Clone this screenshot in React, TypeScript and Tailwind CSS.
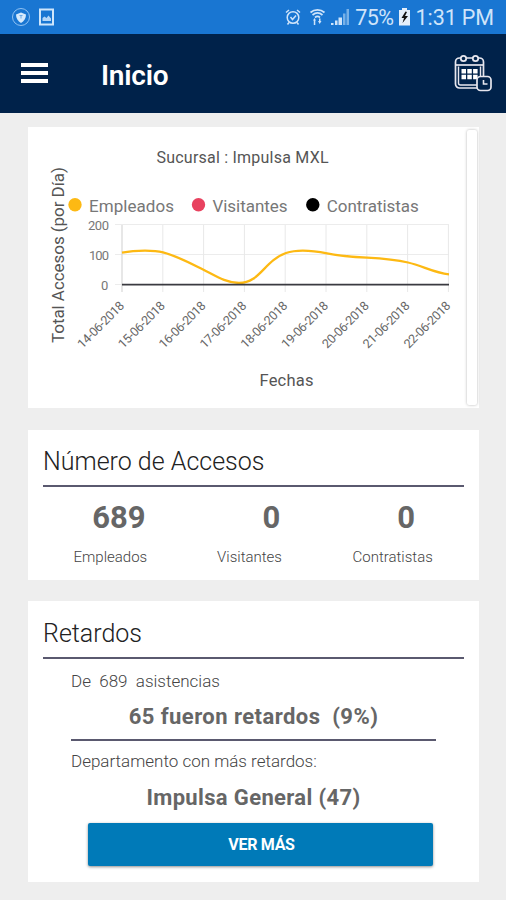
import * as React from 'react';

const DATES = [
  '14-06-2018',
  '15-06-2018',
  '16-06-2018',
  '17-06-2018',
  '18-06-2018',
  '19-06-2018',
  '20-06-2018',
  '21-06-2018',
  '22-06-2018'
];

const LEGEND = [
  {label: 'Empleados', color: '#fdb913', x: 47, width: 85},
  {label: 'Visitantes', color: '#e8425f', x: 170.5, width: 75},
  {label: 'Contratistas', color: '#000000', x: 284.8, width: 92}
];

const Y_TICKS = [
  {label: '200', y: 98, width: 21},
  {label: '100', y: 128, width: 20},
  {label: '0', y: 158, width: 8}
];

const TOTALS = [
  {label: 'Empleados', value: 689, cell: 'w-[135px]', number: 'pl-[17px]'},
  {label: 'Visitantes', value: 0, cell: 'w-[144px]', number: 'pl-[44px]'},
  {label: 'Contratistas', value: 0, cell: 'w-[143px]', number: 'pl-[27px]'}
];

function StatusBar() {
  return (
    <div className="flex h-[34px] items-center justify-between bg-[#1976d2] pr-3 pl-3 text-[#cfe4fa]">
      <svg width="44" height="22" viewBox="0 0 44 22" fill="none">
        <circle cx="9" cy="11" r="8.5" stroke="#8fc1f2" strokeWidth="1" />
        <path d="M4 8.5 9 6.5l5 2c0 4-2 6.500-5 8.500-3-2-5-4.500-5-8.500Z" fill="#d5e9fc" />
        <path d="M7.500 9.500h3M9 9.500v3" stroke="#6aa9e6" strokeWidth="1" />
        <rect x="28" y="3.500" width="13" height="15" stroke="#cfe6fb" strokeWidth="2" />
        <path d="M30.500 15v-3l2-1.500 2 1.500 2-2.500 2.500 3V15Z" fill="#b4d6f7" />
      </svg>
      <div className="flex items-center">
        <svg width="66" height="22" viewBox="0 0 66 22" fill="none">
          <circle cx="9" cy="11.500" r="5.800" stroke="currentColor" strokeWidth="1.500" />
          <path d="m6.500 11 2 2.500 3.500-4M2 6.500 5 4M16 6.500 13 4M5 16.500l-1.500 2M13 16.500l1.500 2" stroke="currentColor" strokeWidth="1.500" />
          <path d="M26.500 6.500c4-3.500 10-3.500 14 0M28.500 9c3-2.500 7-2.500 10 0M31 11.500c1.500-1.300 3.500-1.300 5 0" stroke="currentColor" strokeWidth="1.700" />
          <path d="M29 14.500h3l-1.500-2.500Zm.8 0h1.500v4.500H29.800ZM34 15h3.500l-1.800 3Zm1-2.500h1.500V16H35Z" fill="currentColor" />
          <path d="M47 17h2.500v2H47ZM51 14.500h2.500V19H51ZM54.500 11.500H58V19h-3.500Z" fill="currentColor" />
          <path d="M59 7.500h2.500V19H59ZM62.500 3H65v16h-2.500Z" fill="#78b1e8" />
        </svg>
        <span className="ml-[5px] pt-[2px] text-[21.5px] leading-none tracking-[-0.5px]">75%</span>
        <svg className="ml-[4px]" width="13" height="20" viewBox="0 0 13 20">
          <path d="M4 1h5v2h3v15.500H1V3h3Z" fill="#e3eefa" />
          <path d="M7.500 4.500 3.500 11H6l-1.500 5L10 9H7L9 5Z" fill="#111" />
        </svg>
        <span className="ml-[5px] pt-[2px] text-[21.5px] leading-none tracking-[-0.1px]">1:31 PM</span>
      </div>
    </div>
  );
}

function CalendarIcon() {
  return (
    <svg width="40" height="40" viewBox="0 0 40 40" fill="none" stroke="#e6e6ee">
      <rect x="2.500" y="4" width="28" height="30" rx="4" strokeWidth="1.700" />
      <path d="M5.500 12.500V29a2 2 0 0 0 2 2H24M27.500 12.500V22" strokeWidth="1.400" />
      <path d="M3 11h27" strokeWidth="1.700" />
      <circle cx="10.500" cy="4.500" r="2.700" fill="#00224a" strokeWidth="1.800" />
      <circle cx="22.500" cy="4.500" r="2.700" fill="#00224a" strokeWidth="1.800" />
      <path
        d="M8.500 15h4.500v4.500H8.500ZM14.300 15h4.500v4.500h-4.500ZM20.100 15h4.500v4.500h-4.500ZM8.500 20.800h4.500v4.500H8.500ZM14.300 20.800h4.500v4.500h-4.500ZM20.100 20.800h4.500v4.500h-4.500Z"
        fill="#ffffff"
        stroke="none"
      />
      <rect x="24" y="22.500" width="14" height="14" rx="3.500" fill="#00224a" strokeWidth="1.700" />
      <path d="M30.500 26v4h4" strokeWidth="1.600" />
    </svg>
  );
}

function Header() {
  return (
    <header className="flex h-[79px] items-center bg-[#00224a] pr-[13px] pl-[21px]">
      <div className="flex flex-col gap-[4px] pb-[1px]">
        <div className="h-[4px] w-[27px] bg-white" />
        <div className="h-[4px] w-[27px] bg-white" />
        <div className="h-[4px] w-[27px] bg-white" />
      </div>
      <h1 className="ml-[53px] pt-[4px] text-[28px] leading-none font-semibold tracking-[-0.2px] text-white">Inicio</h1>
      <div className="ml-auto">
        <CalendarIcon />
      </div>
    </header>
  );
}

function AccessChart() {
  return (
    <svg className="block shrink-0" width="439" height="281" viewBox="0 0 439 281" fontFamily="Roboto, sans-serif">
      <text x="128.500" y="36" fontSize="16" fill="#555" textLength="172">
        Sucursal : Impulsa MXL
      </text>
      <text transform="translate(36 216) rotate(-90)" fontSize="17" fill="#555" textLength="176">
        Total Accesos (por Día)
      </text>

      {LEGEND.map((item) => (
        <g key={item.label}>
          <circle cx={item.x} cy="77.700" r="6.700" fill={item.color} />
          <text x={item.x + 14} y="84.500" fontSize="17" fill="#777" textLength={item.width}>
            {item.label}
          </text>
        </g>
      ))}

      {Y_TICKS.map((tick) => (
        <g key={tick.label}>
          <path d={`M87 ${tick.y - 0.5}H421`} stroke="#ececec" />
          <text x={81 - tick.width} y={tick.y + 5} fontSize="13" fill="#777" textLength={tick.width}>
            {tick.label}
          </text>
        </g>
      ))}

      {DATES.map((date, i) => {
        const x = 94 + i * 40.8;
        return (
          <g key={date}>
            <path d={`M${x} 98V165`} stroke={i === 0 ? '#cfcfcf' : '#e8e8e8'} />
            <text transform={`translate(${x - 39.5} 222) rotate(-45)`} fontSize="12.500" fill="#666" textLength="60">
              {date}
            </text>
          </g>
        );
      })}

      <path
        d="M94 125.700C101 124.300 109 123.600 117 123.600C124 123.600 130 124 135 125.300C149 129 162 136 175 142.500C187 148.500 198 156 211 156C232 156 236 134 258 126C270 121.800 285 123.500 299 126.300C312 128.800 326 130 339 130.700C354 131.500 367 132.500 380 135.500C395 139 406 146 421 147.300"
        fill="none"
        stroke="#fdb913"
        strokeWidth="2.300"
      />
      <path d="M94 157.600H421" stroke="#3a3a40" strokeWidth="1.600" />
      <text x="231.500" y="259" fontSize="16.500" fill="#555" textLength="54">
        Fechas
      </text>
    </svg>
  );
}

function CardTitle({children}: {children: React.ReactNode}) {
  return (
    <h2 className="h-[42px] border-b-2 border-[#5a596f] pt-px text-[25px] leading-[32px] font-light text-[#222]">
      {children}
    </h2>
  );
}

function TotalsCard() {
  return (
    <section className="mt-[22px] h-[150px] bg-white px-[15px] pt-[15px]">
      <CardTitle>Número de Accesos</CardTitle>
      <div className="flex pt-[14px] text-center text-[#666]">
        {TOTALS.map((item) => (
          <div key={item.label} className={item.cell}>
            <div className={`text-[31px] leading-[34px] font-bold ${item.number}`}>{item.value}</div>
            <div className="mt-[12px] text-[15px] leading-[20px] font-light text-[#444]">{item.label}</div>
          </div>
        ))}
      </div>
    </section>
  );
}

function DelaysCard() {
  return (
    <section className="mt-[21px] h-[281px] bg-white px-[15px] pt-[16px] text-[#666]">
      <CardTitle>Retardos</CardTitle>
      <div className="mx-[28px]">
        <div className="h-[82px] border-b-2 border-[#5a596f] pt-[11px]">
          <p className="text-[17px] leading-[22px] font-light whitespace-pre text-[#444]">De  689  asistencias</p>
          <p className="mt-[11px] text-center text-[22px] leading-[28px] font-bold tracking-[0.45px] whitespace-pre">65 fueron retardos  (9%)</p>
        </div>
        <p className="mt-[9px] text-[17px] leading-[22px] font-light text-[#444]">Departamento con más retardos:</p>
        <p className="mt-[12px] text-center text-[22px] leading-[28px] font-bold tracking-[0.35px]">Impulsa General (47)</p>
        <button className="mt-[11px] ml-[17px] block h-[43px] w-[345px] rounded-[2px] bg-[#007ab8] pl-[2px] text-[16px] font-bold tracking-[-0.3px] text-white shadow-[0_1px_3px_rgba(0,0,0,0.45)]">
          VER MÁS
        </button>
      </div>
    </section>
  );
}

export default function App() {
  return (
    <div className="h-[900px] w-[506px] overflow-hidden bg-[#eeeeee] font-[Roboto,sans-serif]">
      <StatusBar />
      <Header />
      <main className="pt-[14px] pr-[27px] pl-[28px]">
        <section className="flex h-[281px] bg-white">
          <AccessChart />
          <div className="mt-[3px] h-[275px] w-[10px] rounded-[2px] bg-white shadow-[0_0_3px_rgba(0,0,0,0.3)]" />
        </section>
        <TotalsCard />
        <DelaysCard />
      </main>
    </div>
  );
}
